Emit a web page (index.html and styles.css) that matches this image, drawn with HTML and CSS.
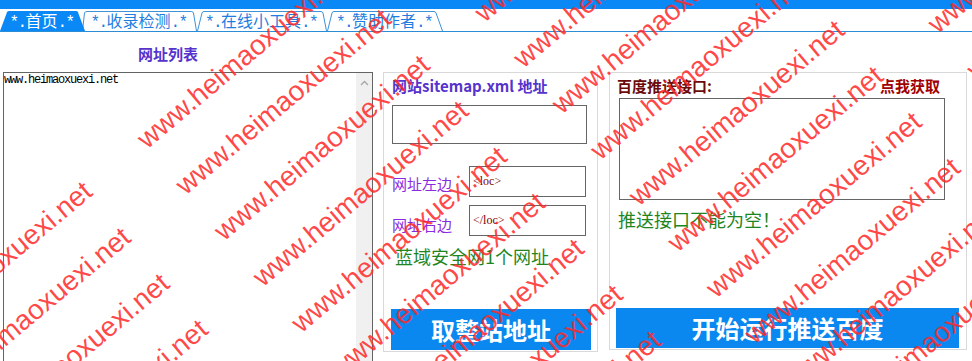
FILE: index.html
```html
<!DOCTYPE html>
<html lang="zh-CN">
<head>
<meta charset="utf-8">
<title>百度推送工具</title>
<link rel="stylesheet" href="styles.css">
</head>
<body>
<div class="page">
  <div class="topbar"></div>
  <nav class="tabs">
    <a class="tab tab-home">
      <svg class="tab-shape" viewBox="0 0 85 20" preserveAspectRatio="none"><path d="M0,20 L7,1.2 Q7.5,0 9,0 L76,0 Q77.5,0 78,1.2 L85,20 Z"/></svg>
      <span class="tab-label"><span class="tab-mark">*.</span>首页<span class="tab-mark">.*</span></span>
    </a>
    <a class="tab tab-sites">
      <svg class="tab-shape" viewBox="0 0 115 20" preserveAspectRatio="none"><path d="M0.5,20 L2.5,2 Q3,0.5 5,0.5 L109.5,0.5 Q111,0.5 111.5,2 L114.5,20"/></svg>
      <span class="tab-label"><span class="tab-mark">*.</span>收录检测<span class="tab-mark">.*</span></span>
    </a>
    <a class="tab tab-tools">
      <svg class="tab-shape" viewBox="0 0 130 20" preserveAspectRatio="none"><path d="M0.5,20 L5,2 Q5.5,0.5 7,0.5 L124,0.5 Q125.5,0.5 126,2 L129.5,20"/></svg>
      <span class="tab-label"><span class="tab-mark">*.</span>在线小工具<span class="tab-mark">.*</span></span>
    </a>
    <a class="tab tab-thanks">
      <svg class="tab-shape" viewBox="0 0 116 20" preserveAspectRatio="none"><path d="M0.5,20 L5,2 Q5.5,0.5 7,0.5 L107,0.5 Q108.5,0.5 109,2 L115.5,20"/></svg>
      <span class="tab-label"><span class="tab-mark">*.</span>赞助作者<span class="tab-mark">.*</span></span>
    </a>
  </nav>
  <main class="content">
    <section class="list-col">
      <h2 class="list-title">网址列表</h2>
      <div class="urlbox">
        <div class="urltext">www.heimaoxuexi.net</div>
        <div class="scrollbar"><svg class="scroll-up" viewBox="0 0 9 6"><polyline points="1,5 4.5,1.5 8,5"/></svg></div>
      </div>
    </section>
    <section class="panel panel-sitemap">
      <div class="panel-title">网站sitemap.xml 地址</div>
      <div class="field field-sitemap"></div>
      <div class="field-row row-left"><label class="field-label">网址左边</label><div class="field field-small">&lt;loc&gt;</div></div>
      <div class="field-row row-right"><label class="field-label">网址右边</label><div class="field field-small">&lt;/loc&gt;</div></div>
      <div class="status status-sitemap">蓝域安全网1个网址</div>
      <button class="action">取整站地址</button>
    </section>
    <section class="panel panel-push">
      <div class="push-head"><span class="push-title">百度推送接口:</span><a class="push-link">点我获取</a></div>
      <div class="field field-api"></div>
      <div class="status status-push">推送接口不能为空！</div>
      <button class="action action-wide">开始运行推送百度</button>
    </section>
  </main>
  <div class="watermark" aria-hidden="true">
    <div class="wm-grid">
      <div class="wm-row"><span>www.heimaoxuexi.net</span><span>www.heimaoxuexi.net</span><span>www.heimaoxuexi.net</span><span>www.heimaoxuexi.net</span><span>www.heimaoxuexi.net</span><span>www.heimaoxuexi.net</span></div>
      <div class="wm-row"><span>www.heimaoxuexi.net</span><span>www.heimaoxuexi.net</span><span>www.heimaoxuexi.net</span><span>www.heimaoxuexi.net</span><span>www.heimaoxuexi.net</span><span>www.heimaoxuexi.net</span></div>
      <div class="wm-row"><span>www.heimaoxuexi.net</span><span>www.heimaoxuexi.net</span><span>www.heimaoxuexi.net</span><span>www.heimaoxuexi.net</span><span>www.heimaoxuexi.net</span><span>www.heimaoxuexi.net</span></div>
      <div class="wm-row"><span>www.heimaoxuexi.net</span><span>www.heimaoxuexi.net</span><span>www.heimaoxuexi.net</span><span>www.heimaoxuexi.net</span><span>www.heimaoxuexi.net</span><span>www.heimaoxuexi.net</span></div>
      <div class="wm-row"><span>www.heimaoxuexi.net</span><span>www.heimaoxuexi.net</span><span>www.heimaoxuexi.net</span><span>www.heimaoxuexi.net</span><span>www.heimaoxuexi.net</span><span>www.heimaoxuexi.net</span></div>
      <div class="wm-row"><span>www.heimaoxuexi.net</span><span>www.heimaoxuexi.net</span><span>www.heimaoxuexi.net</span><span>www.heimaoxuexi.net</span><span>www.heimaoxuexi.net</span><span>www.heimaoxuexi.net</span></div>
      <div class="wm-row"><span>www.heimaoxuexi.net</span><span>www.heimaoxuexi.net</span><span>www.heimaoxuexi.net</span><span>www.heimaoxuexi.net</span><span>www.heimaoxuexi.net</span><span>www.heimaoxuexi.net</span></div>
      <div class="wm-row"><span>www.heimaoxuexi.net</span><span>www.heimaoxuexi.net</span><span>www.heimaoxuexi.net</span><span>www.heimaoxuexi.net</span><span>www.heimaoxuexi.net</span><span>www.heimaoxuexi.net</span></div>
      <div class="wm-row"><span>www.heimaoxuexi.net</span><span>www.heimaoxuexi.net</span><span>www.heimaoxuexi.net</span><span>www.heimaoxuexi.net</span><span>www.heimaoxuexi.net</span><span>www.heimaoxuexi.net</span></div>
      <div class="wm-row"><span>www.heimaoxuexi.net</span><span>www.heimaoxuexi.net</span><span>www.heimaoxuexi.net</span><span>www.heimaoxuexi.net</span><span>www.heimaoxuexi.net</span><span>www.heimaoxuexi.net</span></div>
      <div class="wm-row"><span>www.heimaoxuexi.net</span><span>www.heimaoxuexi.net</span><span>www.heimaoxuexi.net</span><span>www.heimaoxuexi.net</span><span>www.heimaoxuexi.net</span><span>www.heimaoxuexi.net</span></div>
      <div class="wm-row"><span>www.heimaoxuexi.net</span><span>www.heimaoxuexi.net</span><span>www.heimaoxuexi.net</span><span>www.heimaoxuexi.net</span><span>www.heimaoxuexi.net</span><span>www.heimaoxuexi.net</span></div>
      <div class="wm-row"><span>www.heimaoxuexi.net</span><span>www.heimaoxuexi.net</span><span>www.heimaoxuexi.net</span><span>www.heimaoxuexi.net</span><span>www.heimaoxuexi.net</span><span>www.heimaoxuexi.net</span></div>
    </div>
  </div>
</div>
</body>
</html>
```

FILE: styles.css
```css
html, body {
  margin: 0;
  padding: 0;
  height: 361px;
  overflow: hidden;
  background: #fff;
}
body {
  font-family: "Noto Sans CJK SC", sans-serif;
}
.page {
  position: relative;
  width: 972px;
  height: 361px;
  overflow: hidden;
}
.topbar {
  height: 9px;
  background: #0a88f5;
}
.tabs {
  display: flex;
  height: 22px;
  border-bottom: 1px solid #2b8dd6;
}
.tab {
  position: relative;
  display: flex;
  align-items: center;
  justify-content: center;
  height: 20px;
  margin-top: 2px;
  font-size: 16px;
  line-height: 20px;
  color: #1f7ee0;
  text-decoration: none;
}
.tab-home { width: 85px; z-index: 2; color: #fff; }
.tab-sites { width: 115px; margin-left: -3px; }
.tab-tools { width: 130px; }
.tab-thanks { width: 116px; }
.tab-shape {
  position: absolute;
  left: 0;
  top: 0;
  width: 100%;
  height: 100%;
  overflow: visible;
}
.tab-shape path {
  fill: #fff;
  stroke: #3d92d8;
  stroke-width: 1;
}
.tab-home .tab-shape path {
  fill: #0a88f5;
  stroke: none;
}
.tab-label {
  position: relative;
  margin-right: 2px;
  white-space: nowrap;
}
.tab-mark {
  font-family: "Liberation Mono", monospace;
  letter-spacing: -1.6px;
}
.content {
  display: flex;
  align-items: flex-start;
  padding-left: 3px;
  height: 329px;
}
.list-col {
  width: 370px;
  height: 329px;
  display: flex;
  flex-direction: column;
}
.list-title {
  margin: 0;
  height: 40px;
  box-sizing: border-box;
  padding: 5px 40px 0 0;
  line-height: 34px;
  font-size: 15px;
  font-weight: 700;
  color: #5533cc;
  text-align: center;
}
.urlbox {
  flex: 1;
  display: flex;
  border: 1px solid #646464;
  border-bottom: none;
  background: #fff;
}
.urltext {
  flex: 1;
  font-family: "Liberation Mono", monospace;
  font-size: 12px;
  letter-spacing: -1.2px;
  line-height: 14px;
  color: #000;
}
.scrollbar {
  width: 16px;
  background: #f0f0f0;
  display: flex;
  justify-content: center;
  align-items: flex-start;
  padding-top: 7px;
}
.scroll-up {
  width: 9px;
  height: 6px;
}
.scroll-up polyline {
  fill: none;
  stroke: #a6a6a6;
  stroke-width: 1.3;
}
.panel {
  margin-top: 40px;
  border: 1px solid #d9d9d9;
  box-sizing: border-box;
  display: flex;
  flex-direction: column;
  align-items: flex-start;
}
.panel-sitemap {
  width: 215px;
  height: 280px;
  margin-left: 10px;
  padding: 2px 0 0 8px;
}
.panel-title {
  font-size: 15px;
  font-weight: 700;
  line-height: 22px;
  color: #5533cc;
  white-space: nowrap;
}
.field {
  border: 1px solid #666;
  background: #fff;
  box-sizing: border-box;
}
.field-sitemap {
  width: 195px;
  height: 39px;
  margin-top: 8px;
}
.field-row {
  display: flex;
  align-items: flex-end;
}
.row-left { margin-top: 22px; }
.row-right { margin-top: 8px; }
.field-label {
  width: 77px;
  font-size: 15px;
  line-height: 20px;
  color: #8a2be2;
}
.row-left .field-label { margin-bottom: 3px; }
.row-right .field-label { margin-bottom: 1px; }
.field-small {
  width: 117px;
  height: 31px;
  padding-left: 3px;
  font-family: "Liberation Serif", serif;
  font-size: 12px;
  line-height: 29px;
  color: #800000;
}
.status {
  font-size: 18px;
  font-weight: 400;
  line-height: 24px;
  color: #1f861f;
  white-space: nowrap;
}
.status-sitemap { margin-top: 8px; padding-left: 3px; }
.status-push { margin-top: 7px; padding-left: 1px; }
.action {
  margin: auto 0 1px -1px;
  width: 200px;
  height: 41px;
  padding: 0;
  border: 0;
  background: #0a88f0;
  color: #fff;
  font-family: inherit;
  font-size: 24px;
  font-weight: 700;
  line-height: 41px;
  text-align: center;
}
.panel-push {
  width: 358px;
  height: 278px;
  margin-left: 11px;
  padding: 2px 0 0 7px;
}
.push-head {
  align-self: stretch;
  display: flex;
  justify-content: space-between;
  padding-right: 26px;
  font-size: 15px;
  line-height: 22px;
  font-weight: 700;
}
.push-title { color: #6b0a0a; }
.push-link { color: #a00000; }
.field-api {
  width: 326px;
  height: 102px;
  margin: 1px 0 0 2px;
}
.action-wide {
  width: 343px;
  height: 40px;
  line-height: 40px;
}
.watermark {
  position: absolute;
  left: 0;
  top: 0;
  width: 972px;
  height: 361px;
  overflow: hidden;
  pointer-events: none;
  z-index: 10;
}
.wm-grid {
  position: absolute;
  left: -399px;
  top: 557px;
  width: 2040px;
  transform-origin: 0 0;
  transform: rotate(-40deg);
}
.wm-row {
  display: flex;
  height: 60px;
  line-height: 60px;
}
.wm-row span {
  flex: none;
  width: 340px;
  font-family: "Liberation Sans", sans-serif;
  font-size: 28px;
  color: rgba(255, 40, 40, 0.85);
  white-space: nowrap;
}
```
